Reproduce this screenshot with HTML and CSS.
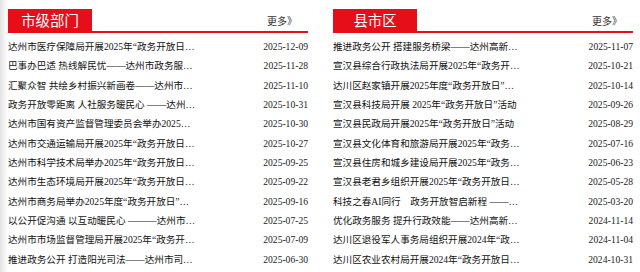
FILE: index.html
```html
<!DOCTYPE html>
<html lang="zh-CN">
<head>
    <meta charset="UTF-8">
    <meta name="viewport" content="width=device-width, initial-scale=1.0">
    <title>政务开放日</title>
    <link rel="stylesheet" href="styles.css">
</head>
<body>
    <div class="wrap">
        <!-- 市级部门 -->
        <section class="panel">
            <div class="panel-head">
                <h2 class="tab">市级部门</h2>
                <a class="more" href="#">更多》</a>
            </div>
            <ul class="news">
                <li><a href="#">达州市医疗保障局开展2025年“政务开放日…</a><span class="date">2025-12-09</span></li>
                <li><a href="#">巴事办巴适 热线解民忧——达州市政务服…</a><span class="date">2025-11-28</span></li>
                <li><a href="#">汇聚众智 共绘乡村振兴新画卷——达州市…</a><span class="date">2025-11-10</span></li>
                <li><a href="#">政务开放零距离 人社服务暖民心 ——达州…</a><span class="date">2025-10-31</span></li>
                <li><a href="#">达州市国有资产监督管理委员会举办2025…</a><span class="date">2025-10-30</span></li>
                <li><a href="#">达州市交通运输局开展2025年“政务开放日…</a><span class="date">2025-10-27</span></li>
                <li><a href="#">达州市科学技术局举办2025年“政务开放日…</a><span class="date">2025-09-25</span></li>
                <li><a href="#">达州市生态环境局开展2025年“政务开放日…</a><span class="date">2025-09-22</span></li>
                <li><a href="#">达州市商务局举办2025年度“政务开放日”…</a><span class="date">2025-09-16</span></li>
                <li><a href="#">以公开促沟通 以互动暖民心 ———达州市…</a><span class="date">2025-07-25</span></li>
                <li><a href="#">达州市市场监督管理局开展2025年“政务开…</a><span class="date">2025-07-09</span></li>
                <li><a href="#">推进政务公开 打造阳光司法——达州市司…</a><span class="date">2025-06-30</span></li>
            </ul>
        </section>

        <!-- 县市区 -->
        <section class="panel">
            <div class="panel-head">
                <h2 class="tab">县市区</h2>
                <a class="more" href="#">更多》</a>
            </div>
            <ul class="news">
                <li><a href="#">推进政务公开 搭建服务桥梁——达州高新…</a><span class="date">2025-11-07</span></li>
                <li><a href="#">宣汉县综合行政执法局开展2025年“政务开…</a><span class="date">2025-10-21</span></li>
                <li><a href="#">达川区赵家镇开展2025年度“政务开放日”…</a><span class="date">2025-10-14</span></li>
                <li><a href="#">宣汉县科技局开展 2025年“政务开放日”活动</a><span class="date">2025-09-26</span></li>
                <li><a href="#">宣汉县民政局开展2025年“政务开放日”活动</a><span class="date">2025-08-29</span></li>
                <li><a href="#">宣汉县文化体育和旅游局开展2025年“政务…</a><span class="date">2025-07-16</span></li>
                <li><a href="#">宣汉县住房和城乡建设局开展2025年“政务…</a><span class="date">2025-06-23</span></li>
                <li><a href="#">宣汉县老君乡组织开展2025年“政务开放日…</a><span class="date">2025-05-28</span></li>
                <li><a href="#">科技之春AI同行　政务开放智启新程 ——…</a><span class="date">2025-03-20</span></li>
                <li><a href="#">优化政务服务 提升行政效能——达州高新…</a><span class="date">2024-11-14</span></li>
                <li><a href="#">达川区退役军人事务局组织开展2024年“政…</a><span class="date">2024-11-04</span></li>
                <li><a href="#">达川区农业农村局开展2024年“政务开放日…</a><span class="date">2024-10-31</span></li>
            </ul>
        </section>
    </div>
</body>
</html>
```

FILE: styles.css
```css
body{
    margin: 0;
    padding: 9px 7px 0 8px;
    background: linear-gradient(to right, #e2e2e2 0px, #f6f6f6 5px, #fff 9px);
    font-family: "Liberation Serif", "Noto Sans CJK SC", serif;
    color: #222;
}
.wrap{
    display: grid;
    grid-template-columns: 300px 300px;
    column-gap: 25px;
}
.panel-head{
    display: flex;
    justify-content: space-between;
    align-items: center;
    height: 22px;
    border-bottom: 2px solid #e60f19;
}
.tab{
    margin: 0;
    width: 84px;
    height: 22px;
    line-height: 22px;
    background-color: #e60f19;
    color: #fff;
    text-align: center;
    font-family: "Noto Sans CJK SC", sans-serif;
    font-size: 14.4px;
    font-weight: 400;
}
.more{
    padding-right: 11px;
    color: #333;
    text-decoration: none;
    font-family: "Noto Sans CJK SC", sans-serif;
    font-size: 10px;
}
.news{
    list-style: none;
    margin: 4px 0 0;
    padding: 0;
}
.news li{
    display: flex;
    justify-content: space-between;
    height: 19.33px;
    line-height: 19.33px;
    font-size: 9.6px;
}
.news a{
    color: #111;
    text-decoration: none;
    white-space: nowrap;
}
.date{
    color: #222;
}
```
